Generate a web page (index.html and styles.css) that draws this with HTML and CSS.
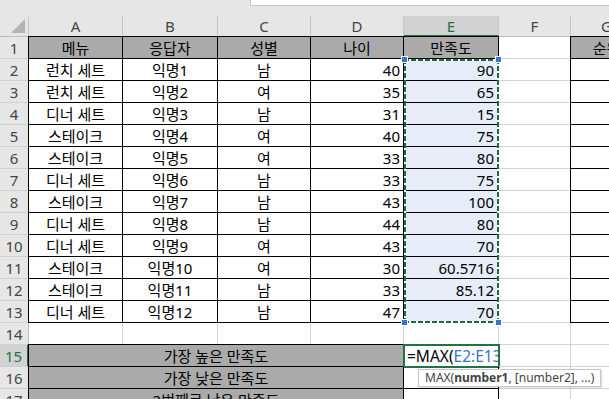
FILE: index.html
```html
<!DOCTYPE html>
<html lang="ko">
<head>
    <meta charset="UTF-8">
    <meta name="viewport" content="width=device-width, initial-scale=1.0">
    <title>만족도 시트</title>
    <link rel="stylesheet" href="styles.css">
</head>
<body>
    <div class="sheet">
        <!-- 수식 입력줄 아래 -->
        <div class="bar"><div class="fx"></div></div>

        <!-- 열 머리글 -->
        <div class="corner"><span class="tri"></span></div>
        <div class="ch">A</div>
        <div class="ch">B</div>
        <div class="ch">C</div>
        <div class="ch">D</div>
        <div class="ch on">E</div>
        <div class="ch">F</div>
        <div class="ch">G</div>

        <!-- 1행: 제목 -->
        <div class="rh">1</div>
        <div class="t g l top">메뉴</div>
        <div class="t g top">응답자</div>
        <div class="t g top">성별</div>
        <div class="t g top">나이</div>
        <div class="t g top">만족도</div>
        <div class="c"></div>
        <div class="t g l top">순위</div>

        <div class="rh">2</div>
        <div class="t l">런치 세트</div><div class="t">익명1</div><div class="t">남</div>
        <div class="t n">40</div><div class="t n sel">90</div><div class="c"></div><div class="t l"></div>

        <div class="rh">3</div>
        <div class="t l">런치 세트</div><div class="t">익명2</div><div class="t">여</div>
        <div class="t n">35</div><div class="t n sel">65</div><div class="c"></div><div class="t l"></div>

        <div class="rh">4</div>
        <div class="t l">디너 세트</div><div class="t">익명3</div><div class="t">남</div>
        <div class="t n">31</div><div class="t n sel">15</div><div class="c"></div><div class="t l"></div>

        <div class="rh">5</div>
        <div class="t l">스테이크</div><div class="t">익명4</div><div class="t">여</div>
        <div class="t n">40</div><div class="t n sel">75</div><div class="c"></div><div class="t l"></div>

        <div class="rh">6</div>
        <div class="t l">스테이크</div><div class="t">익명5</div><div class="t">여</div>
        <div class="t n">33</div><div class="t n sel">80</div><div class="c"></div><div class="t l"></div>

        <div class="rh">7</div>
        <div class="t l">디너 세트</div><div class="t">익명6</div><div class="t">남</div>
        <div class="t n">33</div><div class="t n sel">75</div><div class="c"></div><div class="t l"></div>

        <div class="rh">8</div>
        <div class="t l">스테이크</div><div class="t">익명7</div><div class="t">남</div>
        <div class="t n">43</div><div class="t n sel">100</div><div class="c"></div><div class="t l"></div>

        <div class="rh">9</div>
        <div class="t l">디너 세트</div><div class="t">익명8</div><div class="t">남</div>
        <div class="t n">44</div><div class="t n sel">80</div><div class="c"></div><div class="t l"></div>

        <div class="rh">10</div>
        <div class="t l">디너 세트</div><div class="t">익명9</div><div class="t">여</div>
        <div class="t n">43</div><div class="t n sel">70</div><div class="c"></div><div class="t l"></div>

        <div class="rh">11</div>
        <div class="t l">스테이크</div><div class="t">익명10</div><div class="t">여</div>
        <div class="t n">30</div><div class="t n sel">60.5716</div><div class="c"></div><div class="t l"></div>

        <div class="rh">12</div>
        <div class="t l">스테이크</div><div class="t">익명11</div><div class="t">남</div>
        <div class="t n">33</div><div class="t n sel">85.12</div><div class="c"></div><div class="t l"></div>

        <div class="rh">13</div>
        <div class="t l">디너 세트</div><div class="t">익명12</div><div class="t">남</div>
        <div class="t n">47</div><div class="t n sel">70</div><div class="c"></div><div class="t l"></div>

        <div class="rh">14</div>
        <div class="c"></div><div class="c"></div><div class="c"></div><div class="c"></div>
        <div class="c"></div><div class="c"></div><div class="c"></div>

        <!-- 요약 -->
        <div class="rh on">15</div>
        <div class="t g l top wide">가장 높은 만족도</div>
        <div class="t act">=MAX(<span class="ref">E2:E13</span></div>
        <div class="c"></div><div class="c"></div>

        <div class="rh">16</div>
        <div class="t g l wide">가장 낮은 만족도</div>
        <div class="t"></div>
        <div class="c"></div><div class="c"></div>

        <div class="rh">17</div>
        <div class="t g l wide">2번째로 낮은 만족도</div>
        <div class="t"></div>
        <div class="c"></div><div class="c"></div>

        <!-- 복사 범위 표시 -->
        <div class="ants">
            <span class="h h-tl"></span>
            <span class="h h-tr"></span>
            <span class="h h-bl"></span>
            <span class="h h-br"></span>
        </div>

        <!-- 함수 도움말 -->
        <div class="tip">MAX(<b>number1</b>, [number2], ...)</div>
    </div>
</body>
</html>
```

FILE: styles.css
```css
body {
    margin: 0;
    overflow: hidden;
    background-color: #fff;
    font-family: "Noto Sans", "Noto Sans CJK KR", sans-serif;
}

.sheet {
    position: relative;
    display: grid;
    grid-template-columns: 29px 94px 95px 93px 93px 95px 72px 72px;
    grid-template-rows: 16px 21px;
    grid-auto-rows: 22px;
    width: 643px;
    font-size: 15px;
}

.bar {
    grid-column: 1 / -1;
    background-color: #e6e6e6;
}

.fx {
    margin-left: 250px;
    height: 5px;
    background-color: #fff;
    border-left: 1px solid #c6c6c6;
    border-bottom: 1px solid #c6c6c6;
}

/* 머리글 */
.corner {
    display: flex;
    align-items: flex-end;
    justify-content: flex-end;
    padding: 0 3px 3px 0;
    background-color: #e6e6e6;
    border-right: 1px solid #c6c6c6;
    border-bottom: 1px solid #bdbdbd;
}

.tri {
    width: 14px;
    height: 14px;
    background-color: #b4b4b4;
    clip-path: polygon(100% 0, 100% 100%, 0 100%);
}

.ch, .rh {
    display: flex;
    align-items: center;
    justify-content: center;
    background-color: #e6e6e6;
    color: #444;
}

.ch {
    border-right: 1px solid #c6c6c6;
    border-bottom: 1px solid #bdbdbd;
}

.ch.on {
    background-color: #d2d2d2;
    color: #217346;
    border-bottom: 2px solid #217346;
}

.rh {
    border-right: 1px solid #bdbdbd;
    border-bottom: 1px solid #d0d0d0;
}

.rh.on {
    background-color: #d2d2d2;
    color: #217346;
    border-right: 2px solid #217346;
}

/* 셀 */
.c, .t {
    display: flex;
    align-items: center;
    justify-content: center;
    padding: 0 3px;
    overflow: hidden;
    white-space: nowrap;
    color: #000;
}

.c {
    border-right: 1px solid #d4d4d4;
    border-bottom: 1px solid #d4d4d4;
}

.t {
    border-right: 1px solid #000;
    border-bottom: 1px solid #000;
}

.g {
    background-color: #aaaaaa;
}

.n {
    justify-content: flex-end;
}

.sel {
    background-color: #e6edf8;
    padding-right: 4px;
}

.wide {
    grid-column: span 4;
}

.l {
    box-shadow: -1px 0 #000;
}

.top {
    box-shadow: 0 -1px #000;
}

.l.top {
    box-shadow: -1px 0 #000, 0 -1px #000, -1px -1px #000;
}

.act {
    justify-content: flex-start;
    font-size: 15.5px;
    outline: 2px solid #217346;
    outline-offset: -1px;
}

.ref {
    color: #3f6fc6;
}

/* 복사 범위 점선 */
.ants {
    position: absolute;
    left: 404px;
    top: 59px;
    width: 95px;
    height: 264px;
    box-sizing: border-box;
    background:
        repeating-linear-gradient(90deg, #1d6b40 0 5px, #fff 5px 7px) left top / 100% 2px no-repeat,
        repeating-linear-gradient(90deg, #1d6b40 0 5px, #fff 5px 7px) left bottom / 100% 2px no-repeat,
        repeating-linear-gradient(180deg, #1d6b40 0 5px, #fff 5px 7px) left top / 2px 100% no-repeat,
        repeating-linear-gradient(180deg, #1d6b40 0 5px, #fff 5px 7px) right top / 2px 100% no-repeat;
}

.h {
    position: absolute;
    width: 5px;
    height: 5px;
    background-color: #3a74cf;
    border: 1px solid #fff;
}

.h-tl { left: -3px; top: -3px; }
.h-tr { right: -3px; top: -3px; }
.h-bl { left: -3px; bottom: -3px; }
.h-br { right: -3px; bottom: -3px; }

.tip {
    position: absolute;
    left: 418px;
    top: 369px;
    height: 18px;
    padding: 0 6px;
    box-sizing: border-box;
    line-height: 16px;
    font-size: 12px;
    color: #444;
    white-space: nowrap;
    background-color: #fff;
    border: 1px solid #c6c6c6;
    box-shadow: 1px 1px 2px rgba(0, 0, 0, 0.15);
}

.tip b {
    font-weight: bold;
}
```
